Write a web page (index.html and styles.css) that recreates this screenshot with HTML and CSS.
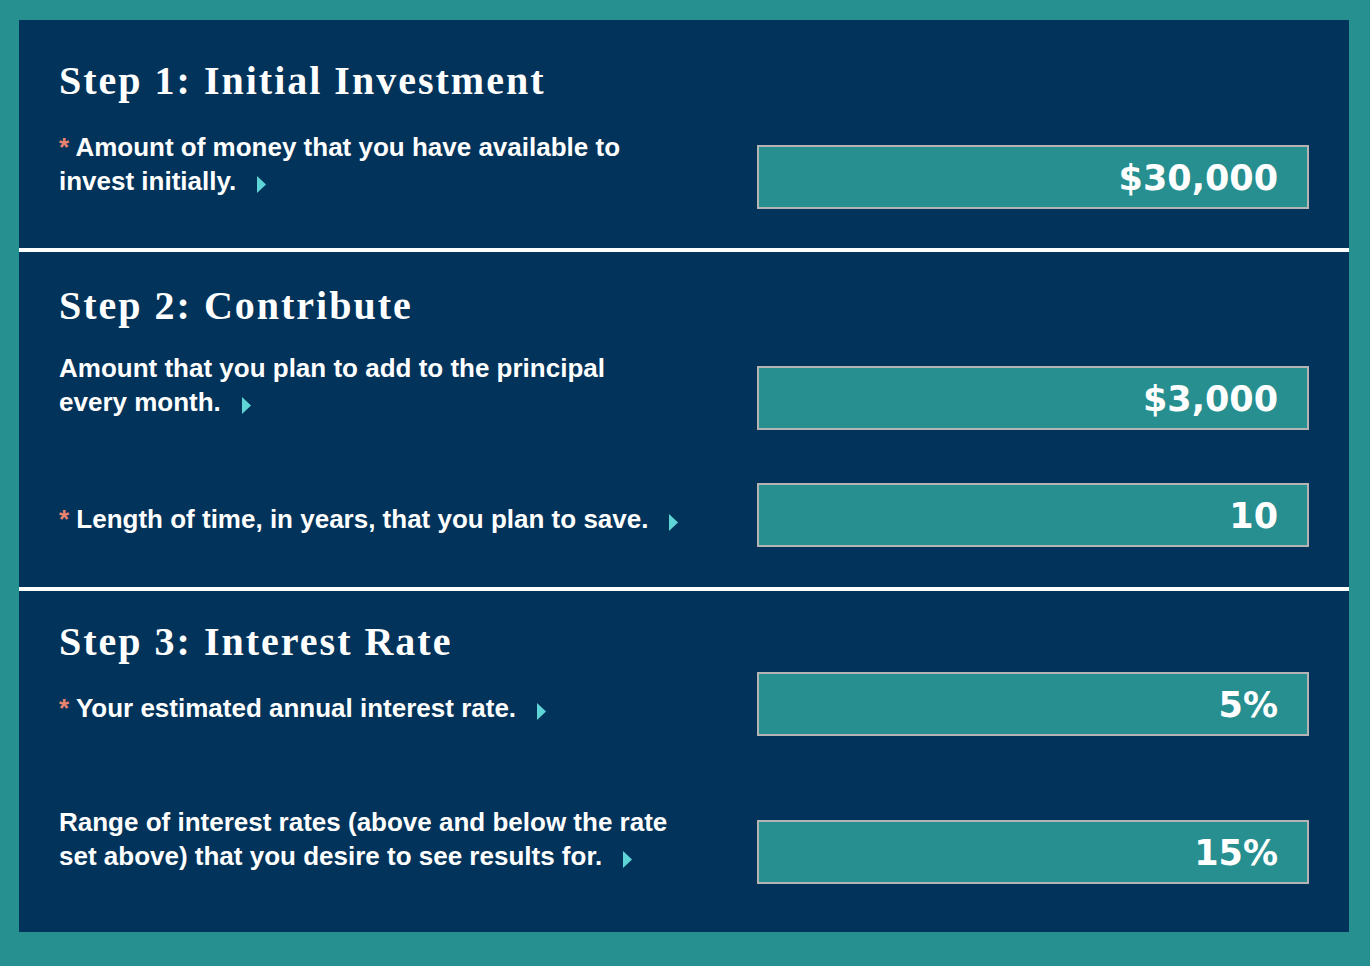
FILE: index.html
```html
<!DOCTYPE html>
<html lang="en">
<head>
<meta charset="utf-8">
<title>Savings Calculator</title>
<link rel="stylesheet" href="styles.css">
</head>
<body>
<div class="panel">
  <section class="step step-1">
    <h2 class="step-title">Step 1: Initial Investment</h2>
    <div class="row row-first">
      <div class="label"><span class="req">*</span> Amount of money that you have available to<br>invest initially.<svg class="arrow" viewBox="0 0 9 17" width="9" height="17"><polygon points="0,0 9,8.5 0,17" fill="#5fd4d6"/></svg></div>
      <div class="field">$30,000</div>
    </div>
  </section>
  <div class="divider"></div>
  <section class="step step-2">
    <h2 class="step-title">Step 2: Contribute</h2>
    <div class="row row-first">
      <div class="label">Amount that you plan to add to the principal<br>every month.<svg class="arrow" viewBox="0 0 9 17" width="9" height="17"><polygon points="0,0 9,8.5 0,17" fill="#5fd4d6"/></svg></div>
      <div class="field">$3,000</div>
    </div>
    <div class="row row-years">
      <div class="label"><span class="req">*</span> Length of time, in years, that you plan to save.<svg class="arrow" viewBox="0 0 9 17" width="9" height="17"><polygon points="0,0 9,8.5 0,17" fill="#5fd4d6"/></svg></div>
      <div class="field">10</div>
    </div>
  </section>
  <div class="divider"></div>
  <section class="step step-3">
    <h2 class="step-title">Step 3: Interest Rate</h2>
    <div class="row row-rate">
      <div class="label"><span class="req">*</span> Your estimated annual interest rate.<svg class="arrow" viewBox="0 0 9 17" width="9" height="17"><polygon points="0,0 9,8.5 0,17" fill="#5fd4d6"/></svg></div>
      <div class="field">5%</div>
    </div>
    <div class="row row-range">
      <div class="label">Range of interest rates (above and below the rate<br>set above) that you desire to see results for.<svg class="arrow" viewBox="0 0 9 17" width="9" height="17"><polygon points="0,0 9,8.5 0,17" fill="#5fd4d6"/></svg></div>
      <div class="field">15%</div>
    </div>
  </section>
</div>
</body>
</html>
```
FILE: styles.css
```css
html, body {
  margin: 0;
  padding: 0;
}

body {
  background: #268f8f;
  min-height: 966px;
}

.panel {
  width: 1330px;
  margin: 20px 0 0 19px;
  background: #02335a;
}

.step {
  padding: 0 40px;
}

.step-1 { padding-top: 37px; padding-bottom: 39px; }
.step-2 { padding-top: 30px; padding-bottom: 40px; }
.step-3 { padding-top: 27px; padding-bottom: 48px; }

.step-title {
  margin: 0;
  font-family: "Liberation Serif", "Times New Roman", serif;
  font-weight: bold;
  font-size: 40px;
  line-height: 48px;
  letter-spacing: 2px;
  color: #ffffff;
}

.divider {
  height: 4px;
  background: #ffffff;
}

.row {
  display: flex;
  align-items: last baseline;
  justify-content: space-between;
}

.step-1 .row-first { margin-top: 25px; }
.step-2 .row-first { margin-top: 21px; }
.row-years { margin-top: 53px; }
.row-rate { margin-top: 6px; }
.row-range { margin-top: 69px; }

.label {
  font-family: "Liberation Sans", Arial, sans-serif;
  font-weight: bold;
  font-size: 26px;
  line-height: 34px;
  color: #ffffff;
  white-space: nowrap;
}

.req {
  color: #e8846f;
}

.arrow {
  display: inline-block;
  margin-left: 21px;
  vertical-align: -3px;
}

.field {
  box-sizing: border-box;
  width: 552px;
  height: 64px;
  border: 2px solid #b4b4b4;
  background: #278f90;
  padding: 3px 29px 0 0;
  text-align: right;
  font-family: "DejaVu Sans", Verdana, sans-serif;
  font-weight: bold;
  font-size: 35px;
  line-height: 57px;
  color: #ffffff;
}
```
